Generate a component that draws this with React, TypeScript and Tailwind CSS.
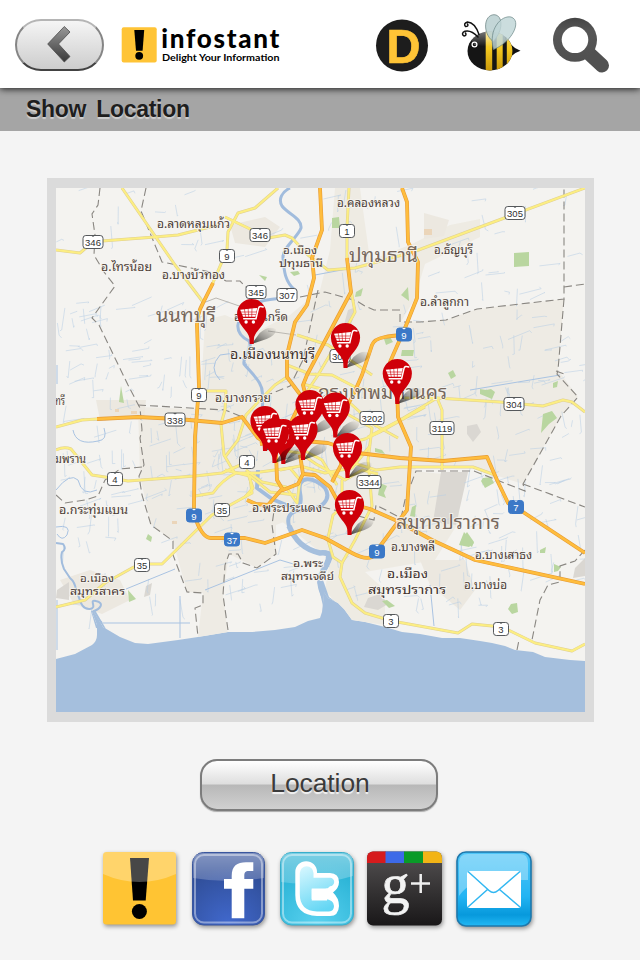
import React from "react";

type Pt = [number, number];

const THAI = '"Noto Sans Thai Looped", Loma, Waree, Garuda, Umpush, "Tlwg Typo", "Liberation Sans", sans-serif';
const SANS = '"Liberation Sans", Arial, sans-serif';

// Place names: text, left x, baseline y, width, font size, colour.
const places: [string, number, number, number, number, string][] = [
  ["อ.คลองหลวง", 337, 207, 63, 12, "#4b3c36"],
  ["อ.ลาดหลุมแก้ว", 157, 228, 73, 12, "#4b3c36"],
  ["อ.เมือง", 283, 254, 34, 11, "#4b3c36"],
  ["ปทุมธานี", 279, 267, 44, 11, "#4b3c36"],
  ["ปทุมธานี", 349, 262, 69, 19, "#75675c"],
  ["อ.ธัญบุรี", 434, 254, 39, 12, "#4b3c36"],
  ["อ.ไทรน้อย", 101, 271, 51, 12, "#4b3c36"],
  ["อ.บางบัวทอง", 162, 279, 63, 12, "#4b3c36"],
  ["อ.ลำลูกกา", 420, 306, 49, 12, "#4b3c36"],
  ["นนทบุรี", 156, 322, 60, 19, "#75675c"],
  ["อ.ปากเกร็ด", 234, 321, 54, 12, "#4b3c36"],
  ["อ.เมืองนนทบุรี", 230, 359, 85, 14, "#3d302c"],
  ["กรุงเทพมหานคร", 318, 399, 129, 19, "#75675c"],
  ["อ.บางกรวย", 215, 402, 56, 12, "#4b3c36"],
  ["ทรี", 55, 405, 10, 12, "#4b3c36"],
  ["มพราน", 55, 463, 31, 12, "#4b3c36"],
  ["อ.กระทุ่มแบน", 59, 514, 69, 12, "#4b3c36"],
  ["อ.พระประแดง", 252, 512, 70, 12, "#4b3c36"],
  ["สมุทรปราการ", 396, 529, 104, 19, "#75675c"],
  ["อ.บางพลี", 391, 551, 44, 12, "#4b3c36"],
  ["อ.บางเสาธง", 475, 559, 57, 12, "#4b3c36"],
  ["อ.พระ", 293, 567, 30, 11, "#4b3c36"],
  ["สมุทรเจดีย์", 281, 580, 53, 11, "#4b3c36"],
  ["อ.เมือง", 80, 582, 34, 11, "#4b3c36"],
  ["สมุทรสาคร", 70, 595, 55, 11, "#4b3c36"],
  ["อ.เมือง", 387, 578, 41, 13, "#3d302c"],
  ["สมุทรปราการ", 368, 594, 78, 13, "#3d302c"],
  ["อ.บางบ่อ", 464, 589, 43, 12, "#4b3c36"],
];

const shields: [string, number, number, boolean?][] = [
  ["346", 93, 242], ["346", 260, 235], ["9", 227, 256], ["1", 347, 231],
  ["305", 515, 213], ["345", 256, 292], ["307", 287, 295], ["302", 340, 356],
  ["9", 199, 395], ["338", 175, 419.5], ["3202", 372, 418], ["304", 514, 404],
  ["3119", 442, 428], ["4", 247, 462], ["4", 115, 479], ["3344", 369, 482],
  ["35", 222, 510], ["35", 142, 565], ["3", 391, 621], ["3", 501, 629],
  ["9", 404, 334.5, true], ["9", 194, 515.5, true], ["7", 516, 507, true],
  ["37", 232, 539.5, true], ["9", 377, 551.5, true],
];

const markers: Pt[] = [
  [251.7, 344], [345.5, 368], [397.3, 404], [265, 451], [283.3, 464], [274.5, 463],
  [310, 435], [335.3, 437.5], [303, 460], [347.5, 478], [349.5, 535],
];

const minorRoads = [
  "M122 188L175 265L203 302",
  "M56 250L80 253L87 247L102 241L155 237L178 235L218 225",
  "M225 217L248 228L268 238L285 235L292 238L308 255L328 270L355 268L413 252L507 217L585 188",
  "M278 188L255 208L238 213L228 232L227 250L212 285",
  "M349 188L347 228V258",
  "M351 290L355 312L348 325L334 348L318 375L304 396",
  "M297 335L328 345L372 375",
  "M287 365L310 374L332 375L357 388L378 391",
  "M56 427L82 420L97 419",
  "M56 450Q64 446 71 449L92 475L105 477L128 481L195 476L222 473L245 463",
  "M205 391H226L225 410L221 424L224 455L234 472",
  "M195 496L213 493Q222 480 236 473H260",
  "M56 607L85 600L105 583L132 568L142 564H162L212 515L252 493L250 477",
  "M368 437L400 420L437 398L500 402L543 406L563 400L572 402L585 412",
  "M400 398L437 398L442 410V470",
  "M350 462L376 470L400 467H473L495 475",
  "M328 540L333 557L342 563L340 577L352 603L365 613L392 621L458 633L472 624L502 627L535 643L572 651L585 644",
  "M355 540L342 563",
  "M355 540L372 506L368 460L372 428L340 410",
  "M328 538L333 515L342 507L342 480",
  "M287 377L275 385L258 402L246 415L238 440L225 457",
  "M246 470L262 482L286 487L297 503L300 480L290 468L260 472",
  "M260 440L278 450L300 453L316 464L345 480L362 470L378 474",
  "M303 450L322 460L337 485M342 445L365 439L380 432L425 407",
  "M225 470L250 476L270 492L296 495",
  "M303 384L340 394L373 424L398 438",
  "M280 470L300 466L325 473L352 468L370 446",
  "M245 497L253 488L248 474",
];

const majorRoads = [
  "M213 283L203 303Q197 314 197 325L199 387L195 437L194 505Q194 521 202 532Q206 538 211 538H245L265 543L302 530L325 538L352 553Q365 560 372 557L392 530L407 510L408 493L411 447L398 417L397 385L390 362L405 328L417 298L418 262L408 242L407 202L402 188",
  "M320 188L322 230L312 258L314 278L307 305L295 322L287 355V377L302 397",
  "M347 258L351 292L335 322L307 375L303 385L305 393L292 420L290 440",
  "M402 335Q390 336 385 337Q374 339 372 345L362 375L355 391L335 430",
  "M97 419L138 417L178 419L222 423L242 417L258 438L276 450",
  "M260 444L292 440L328 443L358 453L400 458L443 461L487 457L497 480L508 503L523 512L585 553",
  "M276 452L277 480L283 490L298 484L303 474L300 455",
  "M303 474L315 475L330 487L337 500L370 509L395 520L432 540L475 560L585 584",
  "M332 482L341 465V443",
  "M247 500L256 504L268 505L282 489",
];

const water = [
  "M290 188C282 192 278 199 282 206C288 214 302 218 301 228C298 237 282 248 283 258C284 271 285 282 295 290C286 304 264 294 250 308C235 318 233 333 249 341C254 350 242 357 244 364C252 374 265 384 262 397C266 414 252 432 263 443",
  "M258 470L257 488L272 499L291 507C300 510 302 503 300 493C296 474 315 477 325 488C332 499 322 510 305 510C292 510 286 515 289 526C295 540 303 549 320 553C340 549 326 566 322 575",
  "M56 543L63 544Q67 549 62 552Q60 560 64 569L70 578Q75 582 76 590C80 597 80 610 90 609C98 608 88 599 96 601C105 603 100 609 94 611Q95 617 102 623",
];

const borders = [
  "M100 188L98 205L92 214L95 235L94 255L104 272L115 286L92 318L99 325L128 385L140 408L142 430L140 438L144 465L139 476L142 495L151 525L173 541L173 555L187 592L203 593V605L195 608L198 637",
  "M146 188L141 211L162 262L172 264L210 272L226 281L240 281L251 292",
  "M300 297L325 292L357 301L365 306L374 310H400V322H420L446 320L477 309L520 304L564 299V188",
  "M564 299L558 370L557 374L578 397L561 416L523 484L525 491L474 471H416L405 500L401 518L376 505L374 520L322 507",
  "M523 484L585 507M564 287L585 284M556 371L564 374",
  "M318 290L303 360L290 386L255 400M138 405L225 410L245 418",
  "M228 630L223 595L225 565L229 554L238 554L243 563L257 568L276 554L272 525L275 504",
  "M585 550L575 561L560 566L560 582L548 585L540 600L532 640M517 650L519 640",
  "M56 495L65 503L85 500L98 496L105 480L120 469L142 467",
];

const parks = [
  "M514 253L529 252V266L514 267Z", "M332 218L339 217L340 228L332 228Z", "M128 590L136 599L129 602Z",
  "M121 386L124 403L119 402Z", "M402 350H414L413 356H401Z", "M448 373l5-3 3 6-5 3z",
  "M480 389l6 1 5-1 4 3-3 7-12-5z", "M543 414l9-3 5 7-8 6-8 9z", "M553 383l5-2-1 6-4 1z",
  "M382 601l5-1 8 6-6 2z", "M511 604l6-1 1 9-6 2-4-5z", "M375 448l7 2 3 4-10-2z",
  "M380 483l7 3-3 7 2 5-8-3z", "M483 478l8-1 3 6-9 5-4-7z", "M148 534l4 3-1 5-5-3z",
  "M461 540l6-8 7 10-2 5z", "M459 545l5-13 10 11-5 4z",
  "M259 275l8 2-2 4z", "M356 292l7-4-2 8-6 1z", "M402 294l6-7 1 14-8-6z", "M412 507l4-2-1 12-5-1z",
  "M384 339l6-2 3 5-7 3z", "M540 550l6-3 -1 6-5 0z", "M290 272l8-1 2 3-6 2z", "M554 564l7 3-3 4-4 1z",
];

// Faint waterways scattered over the land with a fixed-seed generator.
function canalPath(seed: number, count: number, box: [number, number, number, number]): string {
  let s = seed;
  const rnd = () => {
    s = (s * 16807) % 2147483647;
    return s / 2147483647;
  };
  let d = "";
  for (let i = 0; i < count; i++) {
    const x = box[0] + rnd() * box[2];
    const y = box[1] + rnd() * box[3];
    const steep = rnd() > 0.5;
    const a = (rnd() - 0.5) * 7;
    const l = 5 + rnd() * 17;
    const dx = steep ? a : l;
    const dy = steep ? l : a - l * 0.25;
    d += `M${x.toFixed(1)} ${y.toFixed(1)}l${dx.toFixed(1)} ${dy.toFixed(1)}l${(rnd() * 5 - 2).toFixed(1)} ${(rnd() * 5 - 2).toFixed(1)}`;
  }
  return d;
}
const canals =
  canalPath(77, 210, [56, 188, 529, 420]) +
  canalPath(913, 120, [56, 300, 200, 245]) +
  canalPath(431, 110, [400, 330, 180, 270]) +
  canalPath(29, 70, [200, 400, 190, 200]);

function Cart() {
  return (
    <g>
      <path d="M-11.5 -34.300L5.500 -36L3.700 -27.300H-8.600Z" fill="#fff" />
      <path d="M-7.500 -36L-6 -27M-3.600 -36L-3 -27M.3 -36L0 -27M-11 -32H5.500M-10 -29.600H5" stroke="#cf0009" strokeWidth=".6" fill="none" />
      <path d="M11.500 -37Q7.600 -38.600 6.700 -35.500L4.300 -25.300H-8" stroke="#fff" strokeWidth="1.500" fill="none" strokeLinecap="round" />
      <circle cx="-5.600" cy="-22" r="1.700" fill="#fff" />
      <circle cx="1.700" cy="-22" r="1.700" fill="#fff" />
    </g>
  );
}

function CityMap() {
  return (
    <svg className="block h-[524px] w-[529px]" viewBox="56 188 529 524">
      <defs>
        <linearGradient id="pinShade" x1="0" x2="1" y1="1" y2="0">
          <stop offset="0" stopColor="#000" stopOpacity=".75" />
          <stop offset=".45" stopColor="#000" stopOpacity=".35" />
          <stop offset="1" stopColor="#000" stopOpacity="0" />
        </linearGradient>
        <clipPath id="land">
          <path d="M56 188H585V661L570 660L545 657L533 652L515 650L505 646L492 643L480 641L460 638L442 638L420 634L402 632L385 627L365 622L352 620L344 609L338 603L328 598L324 592L323 603L322 612L320 618L308 621L295 627L275 630L252 632L228 632L210 635L198 637L178 640L148 644L135 643L120 637L103 627L94 612L92 612L97 625V635Q97 641 92 645L75 654L56 659Z" />
        </clipPath>
      </defs>
      <rect x="56" y="188" width="529" height="524" fill="#a5bfdd" />
      <g clipPath="url(#land)">
        <rect x="56" y="188" width="529" height="524" fill="#f4f3f0" />
        <path d="M138 407L225 410L255 400L290 386L303 360L318 290L357 301L374 310H400V322L446 320L477 309L564 299L558 370L578 397L561 416L523 484L473 468H416L401 518L376 505L322 507L276 525L276 554L257 568L229 554L223 595L228 635L198 637L203 593L187 592L173 541L151 525L140 476Z" fill="#eeebe4" />
        <path d="M205 320L225 315L260 330L290 315L320 290L330 250L335 188H360L370 260L410 245L450 225L480 219V237L425 264L414 300L390 340L420 400L400 470L455 475L460 520L435 560L365 572L385 590V625L350 620L325 590L330 560L280 520L220 470L200 410Z" fill="#eeebe3" />
        <path d="M60 580l30-10 30 10 10 20-28 14-28-10zM230 225l35-8 15 10-15 20-30-4zM424 213l25 7-5 16-20 3zM96 400h50l-2 20h-44zM420 560h45l10 30-15 20-30-25z" fill="#ece8e0" />
        <path d="M441 472L468 472L456 525L433 522Z M467 426l10-2 4 8-8 10-6-8zM348 310l8-3-6 22-8 3zM368 598l12-4 8 10-10 6-14-3zM57 590l12-8v18l-13-2zM146 586l6-3-2 12-6 2zM575 568l10-10v18l-12 2z" fill="#dad7d2" />
        <path d="M424 229h8v6h-8zM131 411h6v3h-6zM115 409h4v3h-4zM172 521h5v3h-5z" fill="#ebd5b9" />
        <path d={canals} stroke="#b7cde4" strokeWidth=".7" fill="none" opacity=".75" />
        <path d="M57 365V384M56 490Q70 472 78 480Q82 497 97 490M73 430Q76 446 98 441Q108 440 104 428M315 275L347 269M126 589L175 569M103 623H190M180 596V638M57 600V650M56 527Q72 524 67 535Q62 542 57 534M205 590L280 560L300 566M220 380Q208 368 220 355Q240 350 247 365M430 585L434 626M470 390L560 375" stroke="#a9c3e2" strokeWidth="1" fill="none" />
        {parks.map((d) => <path key={d} d={d} fill="#b9d6a0" />)}
        {water.map((d, i) => (
          <path key={d} d={d} stroke="#a1bcdd" strokeWidth={i === 1 ? 4 : i === 2 ? 2 : 3} fill="none" strokeLinejoin="round" />
        ))}
        <path d="M289 526C295 540 303 549 320 553C337 551 325 566 320 577Q319 588 326 600" stroke="#a5bfdd" strokeWidth="5.5" fill="none" />
        <path d="M317 580L323 580L329 597L338 604L323 606ZM91 611L95 610L106 629L96 628Z" fill="#a5bfdd" />
        {borders.map((d) => (
          <path key={d} d={d} stroke="#898681" strokeWidth="1.1" strokeDasharray="8 4" fill="none" />
        ))}
        <path d="M251 310L216 298L203 303M268 331L296 335M302 410L330 392" stroke="#bbb8b2" strokeWidth="1" fill="none" />
        <g fill="none" strokeLinejoin="round">
          {minorRoads.map((d) => <path key={d} d={d} stroke="#dfcf92" strokeWidth="3" />)}
          {minorRoads.map((d) => <path key={d} d={d} stroke="#fcee82" strokeWidth="2" />)}
          {majorRoads.map((d) => <path key={d} d={d} stroke="#e79c36" strokeWidth="3.8" />)}
          {majorRoads.map((d) => <path key={d} d={d} stroke="#ffbd3d" strokeWidth="2.6" />)}
        </g>
      </g>
      {places.map(([t, x, y, w, size, color]) => (
        <text key={t + x} x={x} y={y} textLength={w} lengthAdjust="spacingAndGlyphs" fontSize={size} fill={color}
          stroke="#f7f5f1" strokeWidth="2" strokeOpacity=".85" paintOrder="stroke" fontFamily={THAI}>{t}</text>
      ))}
      {shields.map(([t, x, y, blue]) => {
        const w = t.length === 4 ? 24 : t.length === 3 ? 20 : 15;
        return (
          <g key={t + x}>
            <rect x={x - w / 2} y={y - 6.5} width={w} height="13" rx="2.8" fill={blue ? "#3b78c7" : "#fff"} stroke={blue ? "#3b78c7" : "#55585b"} strokeWidth="1" />
            <path d={`M${x - 2} ${y - 6.5}h4l-2 1.6z`} fill={blue ? "#fff" : "#55585b"} />
            <text x={x} y={y + 4.3} textAnchor="middle" fontSize="9.5" fontFamily={SANS} fill={blue ? "#fff" : "#303030"}>{t}</text>
          </g>
        );
      })}
      {markers.map(([x, y]) => (
        <g key={x} transform={`translate(${x} ${y})`}>
          <path d="M0 0L8 -11Q17 -19 24 -15Q25 -9 15 -5Z" fill="url(#pinShade)" />
          <path d="M-2 0L-2.3 -6C-3 -13 -14.6 -19 -14.6 -30.5A14.6 14.6 0 0 1 14.6 -30.5C14.6 -19 3 -13 2.3 -6L2 0Z" fill="#cf0009" />
          <Cart />
        </g>
      ))}
    </svg>
  );
}

function Logo() {
  return (
    <svg className="ml-[17px] h-[44px] w-[166px]" viewBox="121 22.5 166 44">
      <rect x="121.700" y="26.700" width="35" height="35.300" rx="2" fill="#ffc436" />
      <path d="M134.300 29.500H144.200L142.600 50.300H136Z" />
      <circle cx="139.200" cy="55.300" r="3.900" />
      <text x="161.300" y="47.300" textLength="118" lengthAdjust="spacing" fontFamily="Lato, sans-serif" fontWeight="900" fontSize="26">infostant</text>
      <text x="162" y="60.300" textLength="117.500" lengthAdjust="spacingAndGlyphs" fontFamily="Lato, sans-serif" fontWeight="700" fontSize="10">Delight Your Information</text>
    </svg>
  );
}

function Bee() {
  return (
    <svg className="ml-[31px] h-[62px] w-[62px]" viewBox="460 13.5 62 62">
      <defs>
        <clipPath id="beeBody"><ellipse cx="490" cy="50.5" rx="22.5" ry="19.5" /></clipPath>
        <linearGradient id="beeYellow" x1="0" x2="0" y1="0" y2="1">
          <stop offset="0" stopColor="#f3dd83" /><stop offset=".45" stopColor="#f4c81f" /><stop offset="1" stopColor="#c49308" />
        </linearGradient>
        <linearGradient id="beeGloss" x1="0" x2="0" y1="0" y2="1">
          <stop offset="0" stopColor="#fff" stopOpacity=".45" /><stop offset="1" stopColor="#fff" stopOpacity="0" />
        </linearGradient>
      </defs>
      <path d="M511 44Q515 48.500 520.500 50.300Q515 52 511 56Z" fill="#111" />
      <g clipPath="url(#beeBody)">
        <rect x="465" y="28" width="50" height="45" fill="#151515" />
        <path d="M485.700 28h6.500v45h-6.500zM496.700 28h6v45h-6zM506.800 28h6v45h-6z" fill="url(#beeYellow)" />
        <ellipse cx="488" cy="38" rx="17" ry="8" fill="url(#beeGloss)" />
      </g>
      <path d="M493 41C482 32 484 14.500 494 14.200C503 14.200 504 30 493 41Z" fill="#bdd2d3" fillOpacity=".9" stroke="#647c7d" strokeWidth=".7" />
      <path d="M493.500 49C488 29 501 14.500 511 16.500C522 20 513 41 493.500 49Z" fill="#bfd5d7" fillOpacity=".82" stroke="#6c8687" strokeWidth=".7" />
      <path d="M479 34Q475 22 467.500 21.500Q463 23 465.500 26Q469 26 467.500 23.500M478 36.500Q471 29 465 30.700Q460.500 33 464 35.500Q467 35 465.500 32.500" stroke="#111" strokeWidth="1.500" fill="none" strokeLinecap="round" />
      <circle cx="474.500" cy="44" r="2.400" fill="#111" stroke="#fff" strokeWidth="1.300" />
      <circle cx="475" cy="43.500" r=".6" fill="#fff" />
    </svg>
  );
}

function Header() {
  return (
    <header className="relative flex h-[88px] items-center bg-white pt-[1px] shadow-[0_1px_7px_rgba(0,0,0,0.85)]">
      <button className="ml-[15px] flex h-[52px] w-[89px] items-center justify-center rounded-full border-2 border-t-[#b5b5b5] border-x-[#858585] border-b-[#424242] bg-linear-to-b from-[#f5f5f5] to-[#cdcdcd]" aria-label="Back">
        <svg className="mr-0.5 mb-0.5 h-[38px] w-[26px]" viewBox="47 25 26 38">
          <defs>
            <linearGradient id="backFill" x1="0" x2="0" y1="0" y2="1"><stop offset="0" stopColor="#999" /><stop offset="1" stopColor="#383838" /></linearGradient>
          </defs>
          <path d="M65.300 26.500L71 32L59.500 44L71 56.500L65.300 62L48.700 44Z" fill="url(#backFill)" stroke="#4b4b4b" strokeWidth=".8" />
        </svg>
      </button>
      <Logo />
      <svg className="ml-[88px] h-[54px] w-[54px]" viewBox="375 17.5 54 54">
        <circle cx="402" cy="45" r="26" fill="#1d1d1d" />
        <text x="386.500" y="62" fontFamily={SANS} fontWeight="700" fontSize="49" textLength="34" lengthAdjust="spacingAndGlyphs" fill="#ffc436" stroke="#ffc436" strokeWidth=".7">D</text>
      </svg>
      <Bee />
      <svg className="ml-[30px] h-[60px] w-[60px]" viewBox="552 14.5 60 60">
        <defs>
          <linearGradient id="lens" x1="0" x2="0" y1="0" y2="1"><stop offset="0" stopColor="#444" /><stop offset=".3" stopColor="#565656" /><stop offset="1" stopColor="#505050" /></linearGradient>
        </defs>
        <path d="M588 52L602 65" stroke="#515151" strokeWidth="14" strokeLinecap="round" />
        <circle cx="575" cy="39.300" r="22" fill="url(#lens)" />
        <circle cx="575" cy="39.300" r="13.300" fill="#fff" />
      </svg>
    </header>
  );
}

function SocialBar() {
  return (
    <nav className="mt-[39px] ml-[103px] flex [&>svg]:h-[78px] [&>svg]:overflow-visible [&>svg]:drop-shadow-[1px_2px_2px_rgba(0,0,0,0.4)]">
      <svg className="w-[73px]" viewBox="103 850 73 78">
        <rect x="103" y="852" width="73" height="72.500" rx="3.500" fill="#ffc433" />
        <path d="M130 858H149L145.700 900.500H133Z" />
        <circle cx="139.400" cy="911.500" r="7.500" />
        <path d="M103 874V855Q103 852 106 852H173Q176 852 176 855V874Q158 882 139.500 882T103 874Z" fill="#fff" fillOpacity=".28" />
      </svg>
      <svg className="ml-4 w-[73px]" viewBox="192 850 73 78">
        <defs>
          <radialGradient id="fbBg" cx=".5" cy="1" r=".8"><stop offset="0" stopColor="#4169ce" /><stop offset="1" stopColor="#304e98" /></radialGradient>
          <linearGradient id="gloss" x1="0" x2="0" y1="0" y2="1"><stop offset="0" stopColor="#fff" stopOpacity=".4" /><stop offset="1" stopColor="#fff" stopOpacity=".2" /></linearGradient>
        </defs>
        <rect x="192.500" y="852.500" width="72" height="72.500" rx="11" fill="url(#fbBg)" stroke="#3a579e" />
        <path d="M193 878V864Q193 853 204 853H253Q264 853 264 864V878Q228 884 193 878Z" fill="url(#gloss)" />
        <rect x="195" y="855" width="67" height="67.500" rx="9" fill="none" stroke="#fff" strokeOpacity=".42" strokeWidth="2" />
        <path d="M231.700 918.300V888.800H224V879H231.700V876C231.700 866 237 862.300 246 862.300H253.300V871H249C245 871 244.300 872.500 244.300 876V879H253.300V888.800H244.300V918.300Z" fill="#fff" />
      </svg>
      <svg className="ml-[15px] w-[74px]" viewBox="280 850 74 78">
        <defs>
          <radialGradient id="twBg" cx=".5" cy="1" r=".9"><stop offset="0" stopColor="#5bd2f0" /><stop offset="1" stopColor="#25b0d3" /></radialGradient>
          <linearGradient id="twBird" x1="300" x2="320" y1="866" y2="912" gradientUnits="userSpaceOnUse"><stop offset="0" stopColor="#d9f8ff" /><stop offset="1" stopColor="#63d6f4" /></linearGradient>
        </defs>
        <rect x="280.500" y="852.500" width="73" height="72.500" rx="11" fill="url(#twBg)" stroke="#38aecb" />
        <path d="M281 878V864Q281 853 292 853H342Q353 853 353 864V876Q317 887 281 882Z" fill="url(#gloss)" />
        <rect x="283" y="855" width="68" height="67.500" rx="9" fill="none" stroke="#fff" strokeOpacity=".42" strokeWidth="2" />
        <path d="M295.300 872A10.800 10.800 0 0 1 317 872V873H330Q339 873.500 339 882Q339 888 333 892.500Q339 898 339 906Q338.500 916 330 916H317Q295.300 915 295.300 895Z" fill="#fff" />
        <path d="M299.800 873A6.400 6.400 0 0 1 313.500 873V877.800H330A4.200 4.200 0 0 1 330 886.200Q328 889 324 889.500H311.700V899H325Q334 900 334 906Q334 911 329 911.500H317Q299.800 911 299.800 894Z" fill="url(#twBird)" />
        <path d="M311.700 888.500H327V900.500H311.700Z" fill="#fff" />
      </svg>
      <svg className="ml-[13px] w-[75px]" viewBox="367 850 75 78">
        <defs>
          <linearGradient id="gpBg" x1="0" x2="0" y1="0" y2="1"><stop offset="0" stopColor="#555253" /><stop offset=".6" stopColor="#302e2f" /><stop offset="1" stopColor="#181617" /></linearGradient>
          <clipPath id="gpClip"><rect x="367" y="851.500" width="75" height="74" rx="6" /></clipPath>
        </defs>
        <g clipPath="url(#gpClip)">
          <rect x="367" y="851" width="75" height="76" fill="url(#gpBg)" />
          <rect x="367" y="851" width="19" height="12" fill="#d61b1d" />
          <rect x="385.500" y="851" width="19" height="12" fill="#3d6ae8" />
          <rect x="404" y="851" width="19" height="12" fill="#0a9b28" />
          <rect x="423" y="851" width="19" height="12" fill="#f2b416" />
        </g>
        <text x="381.500" y="902.500" fontFamily='"Liberation Serif", serif' fontSize="58" textLength="28" lengthAdjust="spacingAndGlyphs" fill="#f3f3f3" stroke="#f3f3f3" strokeWidth=".7">g</text>
        <path d="M411 883.500H430M420.700 874V893" stroke="#f0f0f0" strokeWidth="2.500" />
      </svg>
      <svg className="ml-[14px] w-[76px]" viewBox="456 850 76 78">
        <defs>
          <linearGradient id="mailBg" x1="0" x2="0" y1="0" y2="1"><stop offset="0" stopColor="#50c6f7" /><stop offset=".6" stopColor="#22b4f3" /><stop offset=".85" stopColor="#0799dc" /><stop offset="1" stopColor="#22b8f4" /></linearGradient>
        </defs>
        <rect x="457" y="852" width="74" height="74" rx="9" fill="url(#mailBg)" stroke="#1e78ac" strokeWidth="1.600" />
        <path d="M459 896V863Q459 854 468 854H520Q528 854 528 863V880H490Q469 881 459 896Z" fill="#fff" fillOpacity=".32" />
        <rect x="467" y="871" width="54" height="37" rx="3" fill="#fff" />
        <path d="M468 871.500L489 890.500Q493.500 894.500 498 890.500L520 871.500M468 907L487.500 889.500M520 907L499.500 889.500" stroke="#31b7f1" strokeWidth="1.500" fill="none" />
      </svg>
    </nav>
  );
}

export default function App() {
  return (
    <main className="flex h-[960px] w-[640px] flex-col overflow-hidden bg-[#f4f4f4] font-['Liberation_Sans',Arial,sans-serif]">
      <Header />
      <h1 className="h-[43px] bg-[#a5a5a5] pl-[26px] text-[23px] leading-[42px] font-bold tracking-[-0.3px] [word-spacing:4px] text-[#1e1e1e] [text-shadow:0_2px_1px_#d0d0d0]">Show Location</h1>
      <section className="mt-[47px] ml-[47px] w-[547px] border-x-9 border-y-10 border-[#dbdbdb]">
        <CityMap />
      </section>
      <button className="mt-[37px] ml-[200px] h-[52px] w-[238px] rounded-[17px] border-2 border-[#7c7c7c] bg-[linear-gradient(#fff_0%,#dedede_48%,#b8b8b8_50%,#d0d0d0_100%)] pl-0.5 text-center text-[26.500px] leading-[44px] tracking-[-0.100px] text-[#3b3b3b] shadow-[0_1px_1px_#aaa] [text-shadow:0_2px_1px_#f5f5f5]"><span className="relative -top-0.5">Location</span></button>
      <SocialBar />
    </main>
  );
}
